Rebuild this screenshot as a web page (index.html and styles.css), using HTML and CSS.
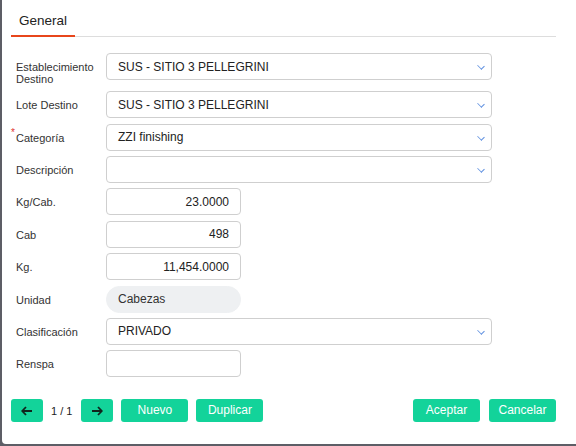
FILE: index.html
```html
<!DOCTYPE html>
<html>
<head>
  <title>Movimiento</title>
  <link rel="stylesheet" href="styles.css">
</head>
<body>
  <div class="panel">
    <div class="tabs">
      <div class="tab active">General</div>
    </div>

    <div class="form">
      <div class="row">
        <label class="label">Establecimiento Destino</label>
        <div class="field select">SUS - SITIO 3 PELLEGRINI<span class="chevron"></span></div>
      </div>
      <div class="row">
        <label class="label">Lote Destino</label>
        <div class="field select">SUS - SITIO 3 PELLEGRINI<span class="chevron"></span></div>
      </div>
      <div class="row">
        <label class="label required">Categoría</label>
        <div class="field select">ZZI finishing<span class="chevron"></span></div>
      </div>
      <div class="row">
        <label class="label">Descripción</label>
        <div class="field select"><span class="chevron"></span></div>
      </div>
      <div class="row">
        <label class="label">Kg/Cab.</label>
        <div class="field short number">23.0000</div>
      </div>
      <div class="row">
        <label class="label">Cab</label>
        <div class="field short number">498</div>
      </div>
      <div class="row">
        <label class="label">Kg.</label>
        <div class="field short number">11,454.0000</div>
      </div>
      <div class="row">
        <label class="label">Unidad</label>
        <div class="field short readonly">Cabezas</div>
      </div>
      <div class="row">
        <label class="label">Clasificación</label>
        <div class="field select">PRIVADO<span class="chevron"></span></div>
      </div>
      <div class="row">
        <label class="label">Renspa</label>
        <div class="field short"></div>
      </div>
    </div>

    <div class="footer">
      <div class="footer-left">
        <button class="btn icon-btn">
          <svg width="12" height="10" viewBox="0 0 12 10"><path d="M11 5H1.5M5 1L1.2 5L5 9" fill="none" stroke="#10251d" stroke-width="1.8"/></svg>
        </button>
        <span class="pager">1 / 1</span>
        <button class="btn icon-btn">
          <svg width="12" height="10" viewBox="0 0 12 10"><path d="M1 5H10.5M7 1L10.8 5L7 9" fill="none" stroke="#10251d" stroke-width="1.8"/></svg>
        </button>
        <button class="btn">Nuevo</button>
        <button class="btn">Duplicar</button>
      </div>
      <div class="footer-right">
        <button class="btn">Aceptar</button>
        <button class="btn">Cancelar</button>
      </div>
    </div>
  </div>
</body>
</html>
```

FILE: styles.css
```css
html, body {
  margin: 0;
  height: 100%;
}

body {
  font-family: "Liberation Sans", Arial, sans-serif;
  background-color: #5d5e66;
  color: #333;
}

.panel {
  margin-left: 2px;
  height: 444px;
  background-color: #fff;
  border-bottom-left-radius: 4px;
  padding: 11px 20px 0 9px;
  box-sizing: border-box;
}

.tabs {
  border-bottom: 1px solid #ddd;
  display: flex;
}

.tab {
  font-size: 13.5px;
  color: #222;
  padding: 2px 8px 7px 8px;
  border-bottom: 2px solid transparent;
  margin-bottom: -1px;
}

.tab.active {
  border-bottom-color: #e8461b;
}

.form {
  margin-top: 16px;
  display: flex;
  flex-direction: column;
  gap: 5.4px;
}

.row {
  display: flex;
  align-items: flex-start;
}

.label {
  width: 90px;
  padding-left: 5px;
  padding-top: 8px;
  font-size: 11px;
  line-height: 12.4px;
  color: #333;
  position: relative;
}

.label.required::before {
  content: "*";
  color: #e0312e;
  position: absolute;
  left: 0;
  top: 3px;
  font-size: 10px;
}

.field {
  box-sizing: border-box;
  height: 27px;
  border: 1px solid #cfcfcf;
  border-radius: 4px;
  padding: 0 11px;
  font-size: 12px;
  color: #222;
  display: flex;
  align-items: center;
  background-color: #fff;
}

.select {
  width: 386px;
  position: relative;
}

.chevron {
  position: absolute;
  right: 7px;
  top: 9px;
  width: 5px;
  height: 5px;
  border-right: 1.5px solid #5f90e0;
  border-bottom: 1.5px solid #5f90e0;
  transform: rotate(45deg) scaleY(0.8);
}

.short {
  width: 135px;
}

.number {
  justify-content: flex-end;
}

.readonly {
  border-color: #eef0f2;
  background-color: #eef0f2;
  border-radius: 14px;
  color: #333;
}

.footer {
  margin-top: 22px;
  display: flex;
  justify-content: space-between;
}

.footer-left, .footer-right {
  display: flex;
  align-items: center;
  gap: 8px;
}

.footer-right {
  gap: 9px;
}

.btn {
  height: 23px;
  width: 67px;
  border: none;
  border-radius: 3px;
  background-color: #13d39a;
  color: #fff;
  font-family: "Liberation Sans", Arial, sans-serif;
  font-size: 12px;
  padding: 0 0 2px 0;
}

.icon-btn {
  width: 32px;
  padding: 0;
  display: flex;
  align-items: center;
  justify-content: center;
}

.pager {
  font-size: 11px;
  color: #222;
  padding: 0 1px 0 0;
}
```
